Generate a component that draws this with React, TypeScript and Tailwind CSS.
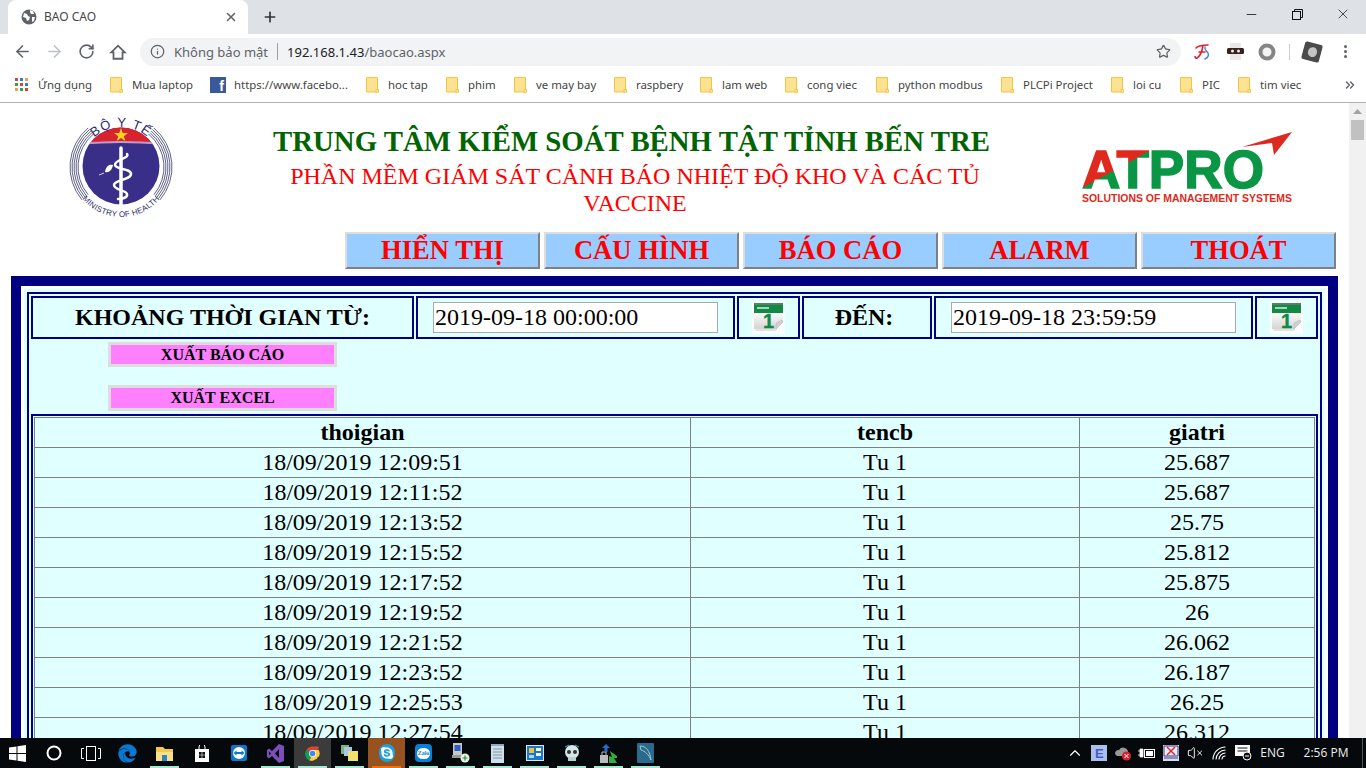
import React from "react";
import { ArrowLeft, ArrowRight, RotateCw, Info, Star, X, Plus, Minus, ChevronUp, ChevronsRight, VolumeX } from "lucide-react";
import { FaEdge, FaSkype } from "react-icons/fa";

const bookmarks = [
  { t: "Mua laptop", w: "w-[100px]" },
  { t: "https://www.facebo...", w: "w-[156px]", fb: true },
  { t: "hoc tap", w: "w-[80px]" },
  { t: "phim", w: "w-[68px]" },
  { t: "ve may bay", w: "w-[100px]" },
  { t: "raspbery", w: "w-[86px]" },
  { t: "lam web", w: "w-[85px]" },
  { t: "cong viec", w: "w-[91px]" },
  { t: "python modbus", w: "w-[125px]" },
  { t: "PLCPi Project", w: "w-[110px]" },
  { t: "loi cu", w: "w-[69px]" },
  { t: "PIC", w: "w-[58px]" },
  { t: "tim viec", w: "w-[105px]" },
];

const rows = [
  ["18/09/2019 12:09:51", "Tu 1", "25.687"],
  ["18/09/2019 12:11:52", "Tu 1", "25.687"],
  ["18/09/2019 12:13:52", "Tu 1", "25.75"],
  ["18/09/2019 12:15:52", "Tu 1", "25.812"],
  ["18/09/2019 12:17:52", "Tu 1", "25.875"],
  ["18/09/2019 12:19:52", "Tu 1", "26"],
  ["18/09/2019 12:21:52", "Tu 1", "26.062"],
  ["18/09/2019 12:23:52", "Tu 1", "26.187"],
  ["18/09/2019 12:25:53", "Tu 1", "26.25"],
  ["18/09/2019 12:27:54", "Tu 1", "26.312"],
];

const navItems = ["HIỂN THỊ", "CẤU HÌNH", "BÁO CÁO", "ALARM", "THOÁT"];

function Folder() {
  return (
    <svg width="13" height="16" viewBox="0 0 13 16" className="shrink-0 mr-[9px]">
      <path d="M.5.5h11v12.5h-1v2h-10z" fill="#fde293" stroke="#f1c542" />
      <rect x="10" y="12.5" width="2.5" height="3" fill="#fde293" stroke="#f1c542" strokeWidth=".8" />
    </svg>
  );
}

function AppsGrid() {
  const c = ["#d9413a", "#2f7de1", "#e8a33a", "#3a9c50", "#d9413a", "#2f7de1", "#e8a33a", "#3a9c50", "#d9413a"];
  return (
    <svg width="13" height="13" viewBox="0 0 13 13" className="shrink-0 mr-[10px]">
      {c.map((f, i) => (
        <rect key={i} x={(i % 3) * 5} y={Math.floor(i / 3) * 5} width="3" height="3" fill={f} />
      ))}
    </svg>
  );
}

function Calendar() {
  return (
    <svg width="33" height="33" viewBox="0 0 33 33">
      <defs>
        <linearGradient id="calbody" x1="0" y1="0" x2="0" y2="1">
          <stop offset="0" stopColor="#ffffff" />
          <stop offset="1" stopColor="#d4d4d4" />
        </linearGradient>
      </defs>
      <rect width="33" height="33" fill="#fbfdfc" />
      <path d="M2 10h29v11l-7 7H2z" fill="url(#calbody)" />
      <path d="M3 28h22l-1 2H4z" fill="#e2e2e2" />
      <rect x="2" y="3" width="29" height="9" fill="#128a45" />
      <rect x="2" y="2" width="29" height="2" fill="#587f66" />
      <rect x="5" y="6" width="12" height="2" fill="#9fd8b4" />
      <text x="11" y="26.500" fontFamily="'Liberation Sans', sans-serif" fontWeight="700" fontSize="20" fill="#128a45" stroke="#128a45" strokeWidth=".4">1</text>
      <path d="M24 28l7-7-1-2-6 3z" fill="#d0d0d0" stroke="#b5b5b5" strokeWidth=".5" />
    </svg>
  );
}

function HealthLogo() {
  const arcs = [43, 45, 47, 49, 51];
  const pt = (r: number, a: number) => {
    const t = (a * Math.PI) / 180;
    return `${55 + r * Math.cos(t)} ${55 - r * Math.sin(t)}`;
  };
  return (
    <svg width="110" height="110" viewBox="0 0 110 110" className="block">
      <defs>
        <path id="hl-top" d="M 15 55 A 40 40 0 0 1 95 55" />
        <path id="hl-bot" d="M 5 55 A 50 50 0 0 0 105 55" />
        <clipPath id="hl-disc"><circle cx="55" cy="54" r="38.500" /></clipPath>
      </defs>
      {arcs.map((r) => (
        <g key={r} fill="none" stroke="#4a4f7a" strokeWidth="0.9">
          <path d={`M ${pt(r, 130)} A ${r} ${r} 0 0 0 ${pt(r, 220)}`} />
          <path d={`M ${pt(r, 50)} A ${r} ${r} 0 0 1 ${pt(r, -40)}`} />
        </g>
      ))}
      <circle cx="55" cy="54" r="38.500" fill="#3a2f88" />
      <g clipPath="url(#hl-disc)">
        <rect x="10" y="10" width="90" height="21" fill="#d8222e" />
        <path d="M10 31 Q55 27 100 31 L100 33 Q55 29 10 33z" fill="#c49ac4" />
      </g>
      <polygon points="55,17 56.7,22 62,22 57.8,25.2 59.3,30 55,27 50.7,30 52.2,25.2 48,22 53.3,22" fill="#ffd21f" transform="translate(0,-1)" />
      <path d="M55 36v58" stroke="#fff" strokeWidth="3.500" strokeLinecap="round" />
      <path d="M61 42c3 4-13 6-12 11s16 3 16 9-17 6-17 11 12 5 13 9-6 5-9 5" fill="none" stroke="#fff" strokeWidth="2.500" strokeLinecap="round" />
      <path d="M47 53c-4-1-7 1-8 7 4 1 7-2 8-7z" fill="#fff" />
      <path d="M38 61l-5 2" stroke="#fff" strokeWidth=".8" />
      <text fontFamily="'Liberation Sans', sans-serif" fontSize="13" fill="#2c2c66" letterSpacing="1.200">
        <textPath href="#hl-top" startOffset="50%" textAnchor="middle">BỘ Y TẾ</textPath>
      </text>
      <text fontFamily="'Liberation Sans', sans-serif" fontSize="8" fill="#2c2c66" letterSpacing=".2">
        <textPath href="#hl-bot" startOffset="50%" textAnchor="middle">MINISTRY OF HEALTH</textPath>
      </text>
    </svg>
  );
}

function AtproLogo() {
  return (
    <svg width="212" height="74" viewBox="0 0 212 74" className="block">
      <defs>
        <linearGradient id="atp" gradientUnits="userSpaceOnUse" x1="1" y1="57" x2="39" y2="126">
          <stop offset="0" stopColor="#e0281e" />
          <stop offset="0" stopColor="#0a9645" />
        </linearGradient>
      </defs>
      <polygon points="161,16 211,1 193,24 191,12" fill="#dd2a20" />
      <text x="1" y="57" fontFamily="'Liberation Sans', sans-serif" fontWeight="700" fontSize="53" fill="url(#atp)" textLength="182" lengthAdjust="spacingAndGlyphs" stroke="url(#atp)" strokeWidth="1.500">ATPRO</text>
      <text x="1" y="71" fontFamily="'Liberation Sans', sans-serif" fontWeight="700" fontSize="10.5" fill="#dd2a20" textLength="210" lengthAdjust="spacingAndGlyphs">SOLUTIONS OF MANAGEMENT SYSTEMS</text>
    </svg>
  );
}

function Globe() {
  return (
    <svg width="16" height="16" viewBox="0 0 16 16">
      <circle cx="8" cy="8" r="7.5" fill="#5f6368" />
      <path d="M3 4l3 1 1 2 2 1-1 3-2 1-1-3-3-1zM9 1l3 1 1 3-3 0-1-2zM11 8l3 0-1 4-2 1z" fill="#fff" />
    </svg>
  );
}

function Restore() {
  return (
    <svg width="11" height="11" viewBox="0 0 11 11" fill="none" stroke="#111" strokeWidth="1">
      <rect x=".5" y="2.5" width="8" height="8" />
      <path d="M2.5 2.5v-2h8v8h-2" />
    </svg>
  );
}

const WinIcon = () => (
  <svg width="17" height="17" viewBox="0 0 17 17" fill="#fff">
    <path d="M0 2.5l7.5-1v6.500H0zM8.500 1.300L17 0v8H8.500zM0 9h7.500v6.500l-7.500-1zM8.500 9H17v8l-8.500-1.300z" />
  </svg>
);
const Cortana = () => (
  <svg width="16" height="16" viewBox="0 0 16 16"><circle cx="8" cy="8" r="6.500" fill="none" stroke="#fff" strokeWidth="2" /></svg>
);
const TaskView = () => (
  <svg width="20" height="15" viewBox="0 0 20 15" fill="none" stroke="#fff"><rect x="5.500" y=".5" width="9" height="14" /><path d="M3 2.500H.5v10H3M17 2.500h2.500v10H17" /></svg>
);
const FolderApp = () => (
  <svg width="17" height="17" viewBox="0 0 17 17"><path d="M0 2h7l2 2h8v12H0z" fill="#f5c84b" /><path d="M0 7h17v9H0z" fill="#fbe08a" /><path d="M6 10h5v6H6z" fill="#2a86c8" /></svg>
);
const Store = () => (
  <svg width="14" height="17" viewBox="0 0 14 17"><path d="M0 4h14v13H0z" fill="#fff" /><path d="M4 4V2a3 3 0 016 0v2" fill="none" stroke="#fff" /><path d="M4 7h2.700v2.700H4zM7.300 7H10v2.700H7.300zM4 10.300h2.700V13H4zM7.300 10.300H10V13H7.300z" fill="#111" /></svg>
);
const TeamViewer = () => (
  <svg width="16" height="16" viewBox="0 0 16 16"><rect width="16" height="16" rx="2" fill="#0a78d2" /><circle cx="8" cy="8" r="6" fill="#fff" /><path d="M2.500 8L5.500 5.500V7h5V5.500L13.500 8l-3 2.500V9h-5v1.500z" fill="#0a78d2" /></svg>
);
const VS = () => (
  <svg width="17" height="19" viewBox="0 0 17 19"><path d="M12 0l5 2v15l-5 2-7-7-3 2.500L0 13V6l2-1.500L5 7zM12 5L8 9.500l4 4.500zM2 7.500v4l2-2z" fill="#7a50b8" /></svg>
);
const Chrome = () => (
  <svg width="17" height="17" viewBox="0 0 24 24">
    <path d="M12 12L3.300 7A10 10 0 0112 2h9l-1 5z" fill="#db4437" />
    <path d="M12 12l-4.300 9.800A10 10 0 013.300 7z" fill="#0f9d58" />
    <path d="M12 12h8.700a10 10 0 01-13 9.800z" fill="#ffcd40" />
    <path d="M12 7h8.700a10 10 0 010 10L16 12z" fill="#ffcd40" />
    <circle cx="12" cy="12" r="5" fill="#fff" />
    <circle cx="12" cy="12" r="4" fill="#4285f4" />
  </svg>
);
const Sticky = () => (
  <svg width="18" height="18" viewBox="0 0 18 18"><rect x="0" y="1" width="8" height="9" fill="#7fb27f" /><rect x="3" y="3" width="8" height="9" fill="#a8c8e8" /><rect x="7" y="7" width="10" height="10" fill="#f0e070" /></svg>
);
const Skype = () => (
  <span className="w-[16px] h-[18px] rounded-full bg-[#1d9fe0] flex items-center justify-center text-white"><FaSkype size={14} /></span>
);
const Zalo = () => (
  <span className="w-[17px] h-[18px] rounded-[4px] bg-[#0a7fd8] flex items-center justify-center">
    <span className="w-[13px] h-[11px] rounded-full bg-white text-[#0a7fd8] text-[6px] font-bold leading-[11px] text-center">Zalo</span>
  </span>
);
const Network = () => (
  <svg width="18" height="20" viewBox="0 0 18 20"><rect x="1" y="0" width="9" height="12" fill="#c8c8c8" /><rect x="2.500" y="2" width="6" height="6" fill="#2a5fc8" /><rect x="0" y="12" width="11" height="3" fill="#999" /><circle cx="13" cy="15" r="4.500" fill="#e8f4e8" /><path d="M10.500 15h5M13 12.500v5" stroke="#2a8a3a" strokeWidth="1.200" /></svg>
);
const Notepad = () => (
  <svg width="15" height="19" viewBox="0 0 15 19"><path d="M1 1h13v18H1z" fill="#cfe0ea" /><path d="M3 5h9M3 8h9M3 11h9M3 14h9" stroke="#7f98a8" /><path d="M1 0h13v2H1z" fill="#90a8b8" /></svg>
);
const Panel = () => (
  <svg width="18" height="16" viewBox="0 0 18 16"><rect width="18" height="16" fill="#d8e8f4" /><rect x="1" y="1" width="16" height="14" fill="#1a78c8" /><rect x="3" y="3" width="5" height="5" fill="#f0c040" /><rect x="10" y="3" width="5" height="3" fill="#fff" /><rect x="10" y="8" width="5" height="3" fill="#fff" /><rect x="3" y="10" width="5" height="3" fill="#a8d8f0" /></svg>
);
const Skull = () => (
  <svg width="18" height="18" viewBox="0 0 18 18"><circle cx="9" cy="8" r="7" fill="#d4e8e8" /><circle cx="6" cy="8" r="2" fill="#333" /><circle cx="12" cy="8" r="2" fill="#333" /><rect x="5" y="13" width="8" height="4" fill="#b8d0d0" /><path d="M2 3l4-2M16 3l-4-2" stroke="#4aa" /></svg>
);
const Transfer = () => (
  <svg width="18" height="19" viewBox="0 0 18 19"><rect x="0" y="11" width="8" height="8" fill="#bbb" /><path d="M2 11V8h4v3" fill="none" stroke="#bbb" /><path d="M6 0l4 4H7.500v4h-3V4H2z" fill="#2a6ac8" /><path d="M10 7l7 5v2l-3 0 3 5H9v-7l3 1z" fill="#3aaa3a" /></svg>
);
const Dolphin = () => (
  <svg width="17" height="20" viewBox="0 0 17 20"><rect width="17" height="20" rx="1" fill="#2a6a8c" /><path d="M3 3c6 0 10 5 11 14-2-5-6-9-10-10z" fill="none" stroke="#9cc" /></svg>
);

const apps = [
  { k: "win", c: <WinIcon />, w: "w-[35px]" },
  { k: "cortana", c: <Cortana />, w: "w-[37px]" },
  { k: "tv", c: <TaskView />, w: "w-[37px]" },
  { k: "edge", c: <FaEdge size={19} color="#0a78d2" />, w: "w-[37px]" },
  { k: "folder", c: <FolderApp />, w: "w-[37px]", run: true },
  { k: "store", c: <Store />, w: "w-[37px]" },
  { k: "team", c: <TeamViewer />, w: "w-[37px]" },
  { k: "vs", c: <VS />, w: "w-[37px]", run: true },
  { k: "chrome", c: <Chrome />, w: "w-[37px]", run: true, bg: "bg-[#3b3b3b]" },
  { k: "sticky", c: <Sticky />, w: "w-[37px]", run: true },
  { k: "skype", c: <Skype />, w: "w-[37px]", bg: "bg-[#96521f]", bar: "bg-[#f0700f]", run: true },
  { k: "zalo", c: <Zalo />, w: "w-[37px]", run: true },
  { k: "net", c: <Network />, w: "w-[37px]", run: true },
  { k: "note", c: <Notepad />, w: "w-[37px]", run: true },
  { k: "panel", c: <Panel />, w: "w-[37px]", run: true },
  { k: "skull", c: <Skull />, w: "w-[37px]", run: true },
  { k: "transfer", c: <Transfer />, w: "w-[37px]", run: true },
  { k: "dolphin", c: <Dolphin />, w: "w-[37px]", run: true },
];

function Tray() {
  return (
    <div className="flex items-center h-full text-white">
      <span className="w-[24px] flex justify-center"><ChevronUp size={18} strokeWidth={1.5} /></span>
      <span className="w-[24px] flex justify-center">
        <svg width="16" height="16" viewBox="0 0 16 16"><rect width="16" height="16" fill="#a8c0ea" /><text x="4" y="13" fontFamily="'Liberation Sans', sans-serif" fontSize="13" fontWeight="700" fill="#4a58c8">E</text></svg>
      </span>
      <span className="w-[24px] flex justify-center">
        <svg width="18" height="16" viewBox="0 0 18 16"><path d="M1 9a4 4 0 014-4 5 5 0 019 1v5H3z" fill="#999" /><circle cx="12.500" cy="11" r="4.500" fill="#d92030" /><path d="M10.500 9l4 4M14.500 9l-4 4" stroke="#fff" /></svg>
      </span>
      <span className="w-[24px] flex justify-center">
        <svg width="18" height="11" viewBox="0 0 18 11"><path d="M0 3h2M0 7h2M2 1h3v8H2z" stroke="#fff" fill="#fff" strokeWidth=".8" /><rect x="6.500" y="1.500" width="10" height="8" fill="none" stroke="#fff" /><rect x="8" y="3" width="7" height="5" fill="#fff" /></svg>
      </span>
      <span className="w-[24px] flex justify-center">
        <svg width="16" height="16" viewBox="0 0 16 16"><rect width="16" height="16" fill="#d8dcef" /><path d="M1 1h14v10H1z" fill="#e8eaf6" stroke="#3a3f90" /><path d="M4 2l8 8M12 2l-8 8" stroke="#e02020" strokeWidth="1.400" /><path d="M1 13h14" stroke="#3a3f90" /></svg>
      </span>
      <span className="w-[24px] flex justify-center"><VolumeX size={16} strokeWidth={1.400} /></span>
      <span className="w-[24px] flex justify-center">
        <svg width="14" height="14" viewBox="0 0 14 14" fill="none" stroke="#fff" strokeWidth="1.100">
          <path d="M1 13.500A12.500 12.500 0 0113.500 1" />
          <path d="M4 13.500A9.500 9.500 0 0113.500 4" />
          <path d="M7 13.500A6.500 6.500 0 0113.500 7" />
          <path d="M10 13.500A3.500 3.500 0 0113.500 10" />
        </svg>
      </span>
      <span className="w-[24px] flex justify-center">
        <svg width="17" height="16" viewBox="0 0 17 16"><path d="M0 0h15v11H0z" fill="#fff" /><path d="M2.500 3h10M2.500 6h10" stroke="#111" /><circle cx="12" cy="11" r="4" fill="#111" stroke="#fff" /><path d="M10 11h4" stroke="#fff" /></svg>
      </span>
      <span className="w-[35px] text-center text-[12px] font-['Open_Sans',sans-serif] text-[#eee]">ENG</span>
      <span className="w-[72px] text-center text-[12px] font-['Open_Sans',sans-serif] text-[#eee]">2:56 PM</span>
      <span className="w-[4px] h-full border-l border-[#555]" />
    </div>
  );
}

export default function App() {
  return (
    <div className="w-[1366px] h-screen overflow-hidden flex flex-col bg-white font-['Liberation_Serif',serif]">
      {/* browser chrome */}
      <div className="font-['Noto_Sans',sans-serif] text-[#3c4043]">
        <div className="h-[34px] bg-[#dee1e6] flex items-stretch pl-[8px]">
          <div className="w-[240px] bg-white rounded-t-[8px] flex items-center pl-[13px] pr-[10px]">
            <Globe />
            <span className="ml-[7px] text-[12px] flex-1 text-[#454545]">BAO CAO</span>
            <X size={14} strokeWidth={2.500} className="text-[#5f6368]" />
          </div>
          <div className="w-[44px] flex items-center justify-center">
            <Plus size={16} strokeWidth={2.500} className="text-[#333]" />
          </div>
          <div className="flex-1" />
          <div className="w-[46px] flex justify-center pt-[7px]"><Minus size={15} strokeWidth={1.300} className="text-[#111]" /></div>
          <div className="w-[46px] flex justify-center pt-[9px]"><Restore /></div>
          <div className="w-[46px] flex justify-center pt-[6px]"><X size={16} strokeWidth={1.100} className="text-[#111]" /></div>
        </div>
        <div className="h-[34px] pt-[1px] flex items-center">
          <div className="w-[140px] flex items-center pl-[6px]">
            <span className="w-[32px] flex justify-center"><ArrowLeft size={19} strokeWidth={2} className="text-[#5f6368]" /></span>
            <span className="w-[32px] flex justify-center"><ArrowRight size={19} strokeWidth={2} className="text-[#bdc1c6]" /></span>
            <span className="w-[32px] flex justify-center"><RotateCw size={17} strokeWidth={2.300} className="text-[#5f6368]" /></span>
            <span className="w-[32px] flex justify-center">
              <svg width="18" height="18" viewBox="0 0 20 20" fill="none" stroke="#5f6368" strokeWidth="2" strokeLinejoin="miter"><path d="M2.500 10.500L10 3l7.500 7.500H15V17.500H5V10.500z" /></svg>
            </span>
          </div>
          <div className="w-[1041px] h-[28px] rounded-full bg-[#f1f3f4] flex items-center pl-[10px] pr-[10px]">
            <Info size={15} strokeWidth={2} className="text-[#5f6368]" />
            <span className="ml-[9px] pt-[2px] text-[13px] text-[#5f6368]">Không bảo mật</span>
            <span className="ml-[9px] mr-[9px] w-px h-[17px] bg-[#9aa0a6]" />
            <span className="pt-[2px] text-[13px] text-[#202124]">192.168.1.43<span className="text-[#5f6368]">/baocao.aspx</span></span>
            <Star size={15} strokeWidth={2} className="ml-auto text-[#5f6368]" />
          </div>
          <div className="flex-1 flex items-center h-full">
            <span className="w-[44px] flex justify-center">
              <svg width="18" height="18" viewBox="0 0 18 18" fill="none" strokeLinecap="round">
                <path d="M2 5c3-3 8-3 12-3M9 3C8 8 7 13 3 15c-1 .5-2-.500-2-1.500M5 9h6" stroke="#e8202e" strokeWidth="1.600" />
                <path d="M11 4c-1 3 2 4 3 6s0 5-3 6" stroke="#3a80e0" strokeWidth="1.400" />
              </svg>
            </span>
            <span className="w-[20px] flex justify-center">
              <svg width="17" height="17" viewBox="0 0 17 17"><rect x="3" y="0" width="11" height="17" fill="#e8e8e8" /><rect x="0" y="5" width="17" height="6" rx="1.500" fill="#3a2020" /><circle cx="5.500" cy="8" r="1.500" fill="#eee" /><circle cx="11.500" cy="8" r="1.500" fill="#eee" /></svg>
            </span>
            <span className="w-[44px] flex justify-center">
              <svg width="18" height="18" viewBox="0 0 18 18"><circle cx="9" cy="9" r="6.500" fill="#f4f4f4" stroke="#858585" strokeWidth="4" /></svg>
            </span>
            <span className="w-px h-[16px] bg-[#ccc]" />
            <span className="ml-[13px] w-[18px] h-[18px] bg-[#4a4a4a] rotate-[15deg] rounded-[2px] flex items-center justify-center">
              <span className="w-[9px] h-[10px] rounded-full bg-[#c4c4c4]" />
            </span>
            <span className="ml-[23px] flex flex-col gap-[2px]">
              <span className="w-[3px] h-[3px] rounded-full bg-[#5f6368]" />
              <span className="w-[3px] h-[3px] rounded-full bg-[#5f6368]" />
              <span className="w-[3px] h-[3px] rounded-full bg-[#5f6368]" />
            </span>
          </div>
        </div>
        <div className="h-[35px] border-b border-[#aeb0b2] flex items-center pl-[15px] text-[11.4px] text-[#444] whitespace-nowrap">
          <div className="w-[95px] flex items-center"><AppsGrid />Ứng dụng</div>
          {bookmarks.map((b) => (
            <div key={b.t} className={`${b.w} flex items-center`}>
              {b.fb ? (
                <span className="w-[16px] h-[16px] mr-[8px] bg-[#3b5998] text-white font-bold text-[14px] leading-[18px] text-right pr-[2px] overflow-hidden shrink-0 font-['Liberation_Sans',sans-serif]">f</span>
              ) : (
                <Folder />
              )}
              {b.t}
            </div>
          ))}
          <ChevronsRight size={14} strokeWidth={2.500} className="text-[#5f6368]" />
        </div>
      </div>

      {/* page */}
      <div className="flex-1 min-h-0 flex">
        <main className="flex-1 min-w-0 overflow-hidden">
          <header className="h-[129px] flex">
            <div className="w-[66px] shrink-0" />
            <div className="w-[110px] pt-[9px] shrink-0"><HealthLogo /></div>
            <div className="w-[899px] ml-[6px] shrink-0 text-center pt-[20px]">
              <h1 className="text-[28.8px] leading-[36px] font-bold text-[#006400] whitespace-nowrap">TRUNG TÂM KIỂM SOÁT BỆNH TẬT TỈNH BẾN TRE</h1>
              <p className="text-[24px] leading-[27px] text-[#ff0000] w-[720px] mx-auto mt-[4px] pl-[7px]">PHẦN MỀM GIÁM SÁT CẢNH BÁO NHIỆT ĐỘ KHO VÀ CÁC TỦ VACCINE</p>
            </div>
            <div className="pt-[28px]"><AtproLogo /></div>
          </header>

          <nav className="flex gap-[4px] pl-[345px]">
            {navItems.map((n) => (
              <div key={n} className="w-[195px] h-[37px] bg-[#99ccff] border-2 border-t-[#dddddd] border-l-[#dddddd] border-r-[#808080] border-b-[#808080] text-[#ff0000] font-bold text-[26.6px] leading-[32px] text-center">{n}</div>
            ))}
          </nav>

          <section className="mt-[7px] ml-[11px] w-[1327px] border-[10px] border-[#000080] bg-white p-[3px]">
            <div className="bg-[#e0ffff] p-[3px]">
              <div className="border-2 border-[#000080] p-[2px] text-black">
                <div className="flex gap-[2px] h-[43px]">
                  <div className="w-[383px] pb-[2px] border-2 border-[#000080] flex items-center justify-center text-[24px] font-bold">KHOẢNG THỜI GIAN TỪ:</div>
                  <div className="w-[319px] border-2 border-[#000080] flex items-center pl-[15px]">
                    <input readOnly value="2019-09-18 00:00:00" className="w-[285px] h-[31px] border border-[#aaaaaa] bg-white px-[1px] pb-[2px] text-[24px] outline-none" />
                  </div>
                  <div className="w-[63px] border-2 border-[#000080] flex items-center justify-center"><Calendar /></div>
                  <div className="w-[130px] pb-[2px] pr-[6px] border-2 border-[#000080] flex items-center justify-center text-[24px] font-bold">ĐẾN:</div>
                  <div className="w-[319px] border-2 border-[#000080] flex items-center pl-[15px]">
                    <input readOnly value="2019-09-18 23:59:59" className="w-[285px] h-[31px] border border-[#aaaaaa] bg-white px-[1px] pb-[2px] text-[24px] outline-none" />
                  </div>
                  <div className="w-[63px] border-2 border-[#000080] flex items-center justify-center"><Calendar /></div>
                </div>

                <div className="pl-[77px] pt-[3px] pb-[3px]">
                  <div className="w-[229px] h-[25px] border-[3px] border-[#dddddd] bg-[#ff80ff] text-center text-[16px] leading-[19px] font-bold">XUẤT BÁO CÁO</div>
                  <div className="w-[229px] h-[26px] mt-[18px] border-[3px] border-[#dddddd] bg-[#ff80ff] text-center text-[16px] leading-[20px] font-bold">XUẤT EXCEL</div>
                </div>

                <div className="border-2 border-[#000080] p-[1px]">
                  <table className="w-[1281px] table-fixed border-separate border-spacing-0 border-l border-t border-[#808080] text-[24px]">
                    <colgroup>
                      <col className="w-[656px]" />
                      <col className="w-[389px]" />
                      <col className="w-[235px]" />
                    </colgroup>
                    <thead>
                      <tr>
                        {["thoigian", "tencb", "giatri"].map((h) => (
                          <th key={h} className="h-[30px] p-0 border-r border-b border-[#808080] font-bold text-center leading-[27px]">{h}</th>
                        ))}
                      </tr>
                    </thead>
                    <tbody>
                      {rows.map((r) => (
                        <tr key={r[0]}>
                          {r.map((c, i) => (
                            <td key={i} className="h-[30px] p-0 border-r border-b border-[#808080] text-center leading-[27px]">{c}</td>
                          ))}
                        </tr>
                      ))}
                    </tbody>
                  </table>
                </div>
              </div>
            </div>
          </section>
        </main>

        <aside className="w-[17px] shrink-0 bg-[#f1f1f1] flex flex-col items-center pt-[6px]">
          <svg width="9" height="5" viewBox="0 0 9 5"><path d="M4.500 0L9 5H0z" fill="#a3a3a3" /></svg>
          <div className="w-[13px] h-[20px] bg-[#c1c1c1] mt-[6px]" />
        </aside>
      </div>

      {/* taskbar */}
      <footer className="h-[30px] shrink-0 bg-[#05090c] flex justify-between">
        <div className="flex h-full">
          {apps.map((a) => (
            <div key={a.k} className={`${a.w} ${a.bg ?? ""} relative flex items-center justify-center`}>
              {a.c}
              {a.run && <span className={`absolute bottom-0 left-[4px] right-[4px] h-[2px] ${a.bar ?? "bg-[#a5e8d2]"}`} />}
            </div>
          ))}
        </div>
        <Tray />
      </footer>
    </div>
  );
}
